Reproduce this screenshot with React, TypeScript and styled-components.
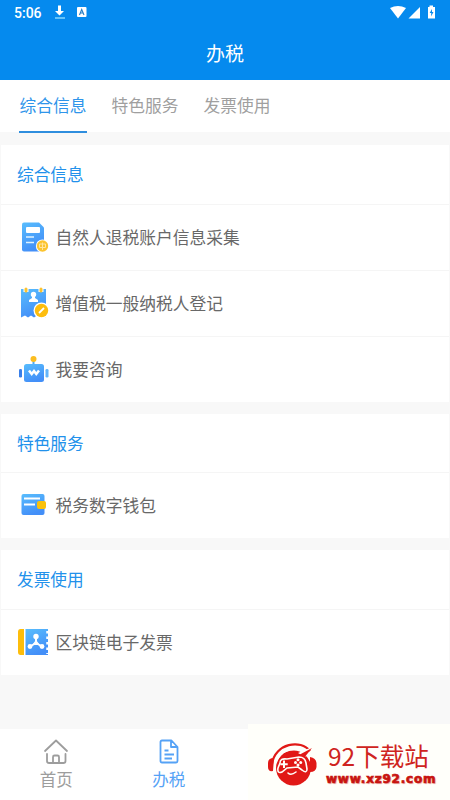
import React from "react";
import styled, { createGlobalStyle } from "styled-components";

const Global = createGlobalStyle`
  *, *::before, *::after { box-sizing: border-box; }
  body { margin: 0; background: #fff; font-family: "Noto Sans CJK SC", sans-serif; }
`;

const Screen = styled.main`
  position: relative;
  width: 450px;
  height: 800px;
  overflow: hidden;
  display: flex;
  flex-direction: column;
  background: #f8f8f8;
`;

const Header = styled.header`
  flex: none;
  height: 80px;
  background: #058aee;
  color: #fff;
`;

const StatusBar = styled.div`
  height: 26px;
  padding: 0 14px;
  display: flex;
  align-items: center;
  justify-content: space-between;
`;

const StatusGroup = styled.div`
  display: flex;
  align-items: center;
  height: 25px;
`;

const Clock = styled.span`
  width: 40px;
  font: 500 14px/25px Roboto, sans-serif;
`;

const Title = styled.h1`
  margin: 0;
  height: 54px;
  font-size: 19px;
  line-height: 54px;
  font-weight: 400;
  text-align: center;
`;

const Tabs = styled.nav`
  flex: none;
  height: 52px;
  padding-left: 19px;
  display: flex;
  gap: 24px;
  background: #fff;
`;

const Tab = styled.button<{ $active?: boolean }>`
  height: 53px;
  padding: 0 0 1px;
  border: 0;
  border-bottom: 2px solid ${(p) => (p.$active ? "#2f8ede" : "transparent")};
  background: none;
  color: ${(p) => (p.$active ? "#2f95ea" : "#9f9f9f")};
  font: 400 16.75px/50px "Noto Sans CJK SC", sans-serif;
  width: 68px;
  white-space: nowrap;
`;

const Content = styled.div`
  flex: 1;
  min-height: 0;
  padding: 13px 1px 0 1px;
  display: flex;
  flex-direction: column;
  gap: 12px;
`;

const Section = styled.section`
  background: #fff;
`;

const SectionTitle = styled.h2`
  margin: 0;
  height: 58.5px;
  padding-left: 16px;
  color: #2291eb;
  font-size: 16.7px;
  line-height: 58px;
  font-weight: 400;
`;

const Row = styled.div`
  height: 66px;
  padding: 0 0 1px 16px;
  border-top: 1px solid #f5f5f5;
  display: flex;
  align-items: center;
  gap: 6.5px;
  color: #686868;
  font-size: 16.75px;
  line-height: 24px;
`;

const RowIcon = styled.svg`
  flex: none;
  width: 32px;
  height: 34px;
`;

const BottomNav = styled.nav`
  flex: none;
  height: 71px;
  display: grid;
  grid-template-columns: repeat(4, 112.5px);
  background: #fff;
`;

const NavItem = styled.div<{ $active?: boolean }>`
  display: flex;
  flex-direction: column;
  align-items: center;
  padding-top: 9px;
  color: ${(p) => (p.$active ? "#55a2f6" : "#9d9d9d")};
  font-size: 16.5px;
  line-height: 26px;
  svg { flex: none; width: 26px; height: 28px; }
`;

const Watermark = styled.aside`
  position: absolute;
  right: 0;
  bottom: 0;
  width: 202px;
  height: 76px;
  padding: 16px 0 0 19px;
  display: flex;
  gap: 8px;
  background: #fffffa;
  color: #e11916;
`;

const Logo = styled.svg`
  flex: none;
  width: 51px;
  height: 44px;
  margin-top: 3px;
`;

const Brand = styled.div`
  display: flex;
  flex-direction: column;
`;

const BrandName = styled.span`
  padding-left: 2px;
  color: #cf2420;
  font-size: 24.5px;
  line-height: 31px;
  white-space: nowrap;
`;

const BrandUrl = styled.span`
  margin-top: 1px;
  font: 700 12px/15px "DejaVu Sans", sans-serif;
  letter-spacing: 0.78px;
  -webkit-text-stroke: 0.7px #c8140f;
  color: #c8140f;
  text-shadow: 1px 1px 1px #e9a6a0;
  white-space: nowrap;
`;

const BlueGradient = ({ id }: { id: string }) => (
  <defs>
    <linearGradient id={id} x1="0" y1="0" x2="0.4" y2="1">
      <stop stopColor="#58bdfd" />
      <stop offset="1" stopColor="#438ff8" />
    </linearGradient>
  </defs>
);

const AccountIcon = () => (
  <RowIcon viewBox="0 0 32 34">
    <BlueGradient id="account" />
    <path d="M7 2.5H22L27 7.5V31.5H7Q5 31.5 5 29.5V4.5Q5 2.5 7 2.5Z" fill="url(#account)" />
    <rect x="9" y="7" width="14" height="6" rx="1" fill="#fff" />
    <path d="M9 17H17M9 22.5H17" stroke="#dff2ff" strokeWidth="1.6" />
    <circle cx="25.5" cy="26" r="6.6" fill="#fff" />
    <circle cx="25.5" cy="26" r="5.7" fill="#fcc42f" />
    <path d="M22.5 24H28.5V27.5H22.5ZM25.5 22.5V30" fill="none" stroke="#ffe5a0" strokeWidth="1" />
  </RowIcon>
);

const RegisterIcon = () => (
  <RowIcon viewBox="0 0 32 34">
    <BlueGradient id="register" />
    <path d="M4 3H29V31.5L26 29.5L23 31.5L20 29.5L17 31.5L14 29.5L11 31.5L8 29.5L4 31.5Z" fill="url(#register)" />
    <path d="M9 2V6M24 2V6" stroke="#fff" strokeWidth="5" />
    <path d="M9 3V5M24 3V5" stroke="#fbc331" strokeWidth="3" strokeLinecap="round" />
    <circle cx="16.5" cy="8.5" r="2.7" fill="#fff" />
    <path d="M15 10H18V12L21 14V16H12V14L15 12Z" fill="#fff" />
    <circle cx="24.5" cy="24.5" r="8" fill="#fff" />
    <circle cx="24.5" cy="24.5" r="6.7" fill="#fdbd0e" />
    <path d="M22 27L27 22" stroke="#fff" strokeWidth="1.8" />
  </RowIcon>
);

const RobotIcon = () => (
  <RowIcon viewBox="0 0 32 34">
    <BlueGradient id="robot" />
    <path d="M16.5 6V13" stroke="#4fa9ef" strokeWidth="2" />
    <circle cx="16.5" cy="7" r="3" fill="#fbbd20" />
    <rect x="7" y="12" width="20" height="18" rx="2.5" fill="url(#robot)" />
    <rect x="2" y="17" width="3" height="8.5" rx="1.3" fill="#397fe9" />
    <rect x="28.5" y="17" width="3" height="8.5" rx="1.3" fill="#65b5fb" />
    <path d="M12 18.5L14.7 22L17 19L19.3 22L22 18.5" fill="none" stroke="#fff" strokeWidth="2.5" />
  </RowIcon>
);

const WalletIcon = () => (
  <RowIcon viewBox="0 0 32 34">
    <BlueGradient id="wallet" />
    <rect x="4.5" y="6" width="23" height="21" rx="2" fill="url(#wallet)" />
    <path d="M7 10.5H23M7 16.5H18" stroke="#fff" strokeWidth="2" />
    <rect x="20" y="13" width="9" height="8" rx="2" fill="#fac10c" />
  </RowIcon>
);

const InvoiceIcon = () => (
  <RowIcon viewBox="0 0 32 34">
    <BlueGradient id="invoice" />
    <path d="M7 4H3.5Q1 4 1 7V27Q1 30 3.5 30H7Z" fill="#fdbd0b" />
    <rect x="8.5" y="4" width="22.5" height="26" fill="url(#invoice)" />
    <path d="M30.5 6V29" stroke="#fff" strokeWidth="2.5" strokeDasharray="2.5 3" />
    <path d="M19 12V18M19 18L13 21.5M19 18L25 21.5" stroke="#fff" strokeWidth="2" />
    <circle cx="19" cy="11.5" r="2.7" fill="#fff" />
    <circle cx="13" cy="21.5" r="2.4" fill="#fff" />
    <circle cx="25" cy="21.5" r="2.4" fill="#fff" />
    <path d="M19 15L23 20H15Z" fill="#fff" />
  </RowIcon>
);

const sections = [
  {
    title: "综合信息",
    rows: [
      { label: "自然人退税账户信息采集", Icon: AccountIcon },
      { label: "增值税一般纳税人登记", Icon: RegisterIcon },
      { label: "我要咨询", Icon: RobotIcon },
    ],
  },
  { title: "特色服务", rows: [{ label: "税务数字钱包", Icon: WalletIcon }] },
  { title: "发票使用", rows: [{ label: "区块链电子发票", Icon: InvoiceIcon }] },
];

const GamepadLogo = () => (
  <Logo viewBox="0 0 51 44">
    <circle cx="26.5" cy="25" r="17.5" fill="#e11916" />
    <path d="M5 21C8 0 34-4 43 8" fill="none" stroke="#e11916" strokeWidth="2.2" />
    <path d="M7 15Q1 15 1 20V24Q1 29 6 28ZM43 14Q49 15 49.5 20V24Q49 29 43 29Z" fill="#e11916" />
    <path d="M9 20C13 5 31 2 40 12" fill="none" stroke="#fffffa" strokeWidth="1.7" />
    <path d="M31 10L45 4L38 14" fill="#fffffa" />
    <path d="M32 12L45 5L37 15L33 14Z" fill="#e11916" />
    <path d="M13 20Q13 15 20 16L32 14Q38 14 39 20L40 26Q40 31 35 27L31 24L20 25L15 29Q10 31 11 25Z" fill="#e11916" stroke="#fffffa" strokeWidth="1.6" />
    <path d="M17 17.5V25M13.3 21.3H20.7" stroke="#fffffa" strokeWidth="2" />
    <circle cx="31" cy="16.8" r="1.5" fill="#fffffa" />
    <circle cx="31" cy="22" r="1.5" fill="#fffffa" />
    <circle cx="28.5" cy="19.5" r="1.5" fill="#fffffa" />
    <circle cx="33.7" cy="19.5" r="1.5" fill="#fffffa" />
    <path d="M21 30Q24 33 29 29" fill="none" stroke="#fffffa" strokeWidth="1.6" strokeLinecap="round" />
  </Logo>
);

export default function App() {
  return (
    <>
      <Global />
      <Screen>
        <Header>
          <StatusBar>
            <StatusGroup>
              <Clock>5:06</Clock>
              <svg width="34" height="16" viewBox="0 0 34 16">
                <path d="M4 0.5H7V6H10L5.5 10.5L1 6H4Z" fill="#fff" />
                <path d="M1 13H11" stroke="#9be2ff" strokeWidth="1.3" />
                <rect x="23" y="2" width="9.5" height="10" rx="1" fill="#fff" />
                <path d="M25.5 10L27.7 4.5L30 10M26.2 8H29.2" fill="none" stroke="#287ec4" strokeWidth="1.1" />
              </svg>
            </StatusGroup>
            <svg width="46" height="16" viewBox="0 0 46 16">
              <path d="M0 3Q8 -1 16 3L8 13.5Z" fill="#fff" />
              <path d="M30 2V13.5H18.5Z" fill="#fff" />
              <path d="M38 2H39.5V0.5H43V2H45V13.5H38Z" fill="#fff" />
              <path d="M42 4L39.7 8H41.3L41 11.5L43.5 7H42Z" fill="#058aee" />
            </svg>
          </StatusBar>
          <Title>办税</Title>
        </Header>
        <Tabs>
          <Tab $active>综合信息</Tab>
          <Tab>特色服务</Tab>
          <Tab>发票使用</Tab>
        </Tabs>
        <Content>
          {sections.map(({ title, rows }) => (
            <Section key={title}>
              <SectionTitle>{title}</SectionTitle>
              {rows.map(({ label, Icon }) => (
                <Row key={label}>
                  <Icon />
                  <span>{label}</span>
                </Row>
              ))}
            </Section>
          ))}
        </Content>
        <BottomNav>
          <NavItem>
            <svg viewBox="0 0 26 28" fill="none" stroke="currentColor" strokeWidth="1.8" strokeLinecap="round" strokeLinejoin="round">
              <path d="M2 13L13 2.5L24 13M4 16V23Q4 25 6 25H20.5Q22.5 25 22.5 23V16M10 25V19Q10 17.5 11.5 17.5H14.5Q16 17.5 16 19V25" />
            </svg>
            <span>首页</span>
          </NavItem>
          <NavItem $active>
            <svg viewBox="0 0 26 28" fill="none" stroke="currentColor" strokeWidth="1.8" strokeLinejoin="round">
              <path d="M6 2.5H15.5L21.5 9V23Q21.5 24.5 20 24.5H6Q4.5 24.5 4.5 23V4Q4.5 2.5 6 2.5ZM15 3V9H21M8.5 12.5H12.5M8.5 16.5H18M8.5 20.5H16" />
            </svg>
            <span>办税</span>
          </NavItem>
        </BottomNav>
        <Watermark>
          <GamepadLogo />
          <Brand>
            <BrandName>92下载站</BrandName>
            <BrandUrl>www.xz92.com</BrandUrl>
          </Brand>
        </Watermark>
      </Screen>
    </>
  );
}
